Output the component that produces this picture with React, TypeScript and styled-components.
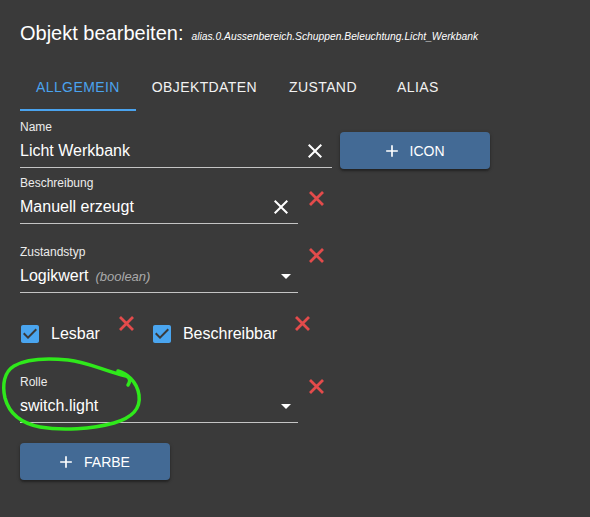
import React from 'react';
import styled, { createGlobalStyle } from 'styled-components';

const GlobalStyle = createGlobalStyle`
  html, body {
    margin: 0;
    padding: 0;
    background: #3a3a3a;
  }
  body {
    font-family: 'Liberation Sans', Arial, sans-serif;
    color: #fff;
  }
  * {
    box-sizing: border-box;
  }
`;

const Page = styled.div`
  position: relative;
  width: 590px;
  height: 517px;
  background: #3a3a3a;
  overflow: hidden;
`;

const Title = styled.div`
  margin: 21px 0 0 20px;
  height: 24px;
  line-height: 24px;
  font-size: 20px;
  color: #fff;
  white-space: nowrap;
`;

const PathText = styled.span`
  margin-left: 8px;
  font-size: 10.3px;
  font-style: italic;
`;

const TabBar = styled.div`
  display: flex;
  margin: 18px 0 0 20px;
  height: 48px;
`;

const Tab = styled.div<{ active?: boolean }>`
  display: flex;
  align-items: center;
  justify-content: center;
  min-width: 90px;
  padding: 0 16px;
  font-size: 14px;
  letter-spacing: 0.4px;
  text-transform: uppercase;
  color: ${p => (p.active ? '#4aa3ee' : '#f2f2f2')};
  box-shadow: ${p => (p.active ? 'inset 0 -2px 0 #4aa3ee' : 'none')};
`;

const Form = styled.div`
  padding-left: 20px;
`;

const Row = styled.div<{ top: number }>`
  display: flex;
  align-items: flex-start;
  margin-top: ${p => p.top}px;
`;

const Field = styled.div<{ width: number }>`
  width: ${p => p.width}px;
`;

const Label = styled.div`
  font-size: 12px;
  line-height: 16px;
  color: #ececec;
`;

const InputRow = styled.div`
  display: flex;
  align-items: center;
  height: 33px;
  padding: 4px 0;
  border-bottom: 1px solid #c4c4c4;
`;

const Value = styled.span`
  flex: 1;
  font-size: 16px;
  line-height: 24px;
  color: #fff;
  white-space: nowrap;
`;

const Hint = styled.span`
  margin-left: 7px;
  font-size: 13px;
  font-style: italic;
  color: #a9a9a9;
`;

const FieldIcon = styled.svg`
  width: 24px;
  height: 24px;
  margin-right: 5px;
  fill: #fff;
  flex-shrink: 0;
`;

const DropIcon = styled.svg`
  width: 24px;
  height: 24px;
  fill: #fff;
  flex-shrink: 0;
`;

const ActionButton = styled.button<{ top?: number }>`
  display: flex;
  align-items: center;
  justify-content: center;
  width: 150px;
  height: 37px;
  margin: ${p => p.top ?? 0}px 0 0 ${p => (p.top ? 8 : 0)}px;
  border: none;
  border-radius: 4px;
  background: #436a95;
  box-shadow: 0 2px 2px rgba(0, 0, 0, 0.3), 0 1px 4px rgba(0, 0, 0, 0.2);
  color: #fff;
  font-family: 'Liberation Sans', Arial, sans-serif;
  font-size: 14px;
  text-transform: uppercase;
  padding: 0;
  svg {
    width: 20px;
    height: 20px;
    fill: #fff;
    margin: 0 8px 0 -4px;
  }
`;

const RemoveIcon = styled.svg<{ top: number; left: number }>`
  width: 17px;
  height: 17px;
  margin: ${p => p.top}px 0 0 ${p => p.left}px;
  flex-shrink: 0;
  stroke: #e34b4b;
  stroke-width: 2.8;
`;

const CheckItem = styled.div`
  display: flex;
  align-items: center;
  margin-top: 7px;
`;

const CheckBox = styled.svg<{ lead: number }>`
  width: 24px;
  height: 24px;
  margin-left: ${p => p.lead}px;
  fill: #4aa5ef;
`;

const CheckLabel = styled.span`
  margin-left: 9px;
  font-size: 16px;
  line-height: 18px;
  color: #fff;
`;

const Scribble = styled.svg`
  position: absolute;
  left: 0;
  top: 350px;
  width: 150px;
  height: 90px;
  fill: none;
  stroke: #2fe81b;
  stroke-width: 3.5;
  stroke-linecap: round;
  stroke-linejoin: round;
`;

const closePath =
  'M19 6.41L17.59 5 12 10.59 6.41 5 5 6.41 10.59 12 5 17.59 6.41 19 12 13.41 17.59 19 19 17.59 13.41 12z';
const addPath = 'M19 13h-6v6h-2v-6H5v-2h6V5h2v6h6v2z';
const checkPath =
  'M19 3H5c-1.11 0-2 .9-2 2v14c0 1.1.89 2 2 2h14c1.11 0 2-.9 2-2V5c0-1.1-.89-2-2-2zm-9 14l-5-5 1.41-1.41L10 14.17l7.59-7.59L19 8l-9 9z';

const Clear = () => (
  <FieldIcon viewBox="0 0 24 24">
    <path d={closePath} />
  </FieldIcon>
);

const Arrow = () => (
  <DropIcon viewBox="0 0 24 24">
    <path d="M7 10l5 5 5-5z" />
  </DropIcon>
);

const Remove: React.FC<{ top: number; left?: number }> = ({ top, left = 10 }) => (
  <RemoveIcon viewBox="0 0 17 17" top={top} left={left}>
    <path d="M2 2L15 15M15 2L2 15" />
  </RemoveIcon>
);

const Check: React.FC<{ lead: number }> = ({ lead }) => (
  <CheckBox viewBox="0 0 24 24" lead={lead}>
    <path d={checkPath} />
  </CheckBox>
);

const Plus = () => (
  <svg viewBox="0 0 24 24">
    <path d={addPath} />
  </svg>
);

const App: React.FC = () => {
  return (
    <Page>
      <GlobalStyle />
      <Title>
        Objekt bearbeiten:
        <PathText>alias.0.Aussenbereich.Schuppen.Beleuchtung.Licht_Werkbank</PathText>
      </Title>
      <TabBar>
        <Tab active>Allgemein</Tab>
        <Tab>Objektdaten</Tab>
        <Tab>Zustand</Tab>
        <Tab>Alias</Tab>
      </TabBar>
      <Form>
        <Row top={8}>
          <Field width={312}>
            <Label>Name</Label>
            <InputRow>
              <Value>Licht Werkbank</Value>
              <Clear />
            </InputRow>
          </Field>
          <ActionButton top={13}>
            <Plus />
            Icon
          </ActionButton>
        </Row>
        <Row top={6}>
          <Field width={278}>
            <Label>Beschreibung</Label>
            <InputRow>
              <Value>Manuell erzeugt</Value>
              <Clear />
            </InputRow>
          </Field>
          <Remove top={15} />
        </Row>
        <Row top={20}>
          <Field width={278}>
            <Label>Zustandstyp</Label>
            <InputRow>
              <Value>
                Logikwert<Hint>(boolean)</Hint>
              </Value>
              <Arrow />
            </InputRow>
          </Field>
          <Remove top={3} />
        </Row>
        <Row top={22}>
          <CheckItem>
            <Check lead={-2} />
            <CheckLabel>Lesbar</CheckLabel>
          </CheckItem>
          <Remove top={0} left={18} />
          <CheckItem>
            <Check lead={15} />
            <CheckLabel>Beschreibbar</CheckLabel>
          </CheckItem>
          <Remove top={0} left={17} />
        </Row>
        <Row top={28}>
          <Field width={278}>
            <Label>Rolle</Label>
            <InputRow>
              <Value>switch.light</Value>
              <Arrow />
            </InputRow>
          </Field>
          <Remove top={4} />
        </Row>
        <Row top={20}>
          <ActionButton>
            <Plus />
            Farbe
          </ActionButton>
        </Row>
      </Form>
      <Scribble viewBox="0 350 150 90">
        <path d="M118 371 C126 373 137 381 139 395 C141 410 131 418 114 423 C92 429 62 431 40 427 C20 423 9 413 5 398 C2 385 4 372 14 366 C26 359 48 358 68 360 C88 362 104 371 126 376 C131 378 130 382 128 385" />
      </Scribble>
    </Page>
  );
};

export default App;
